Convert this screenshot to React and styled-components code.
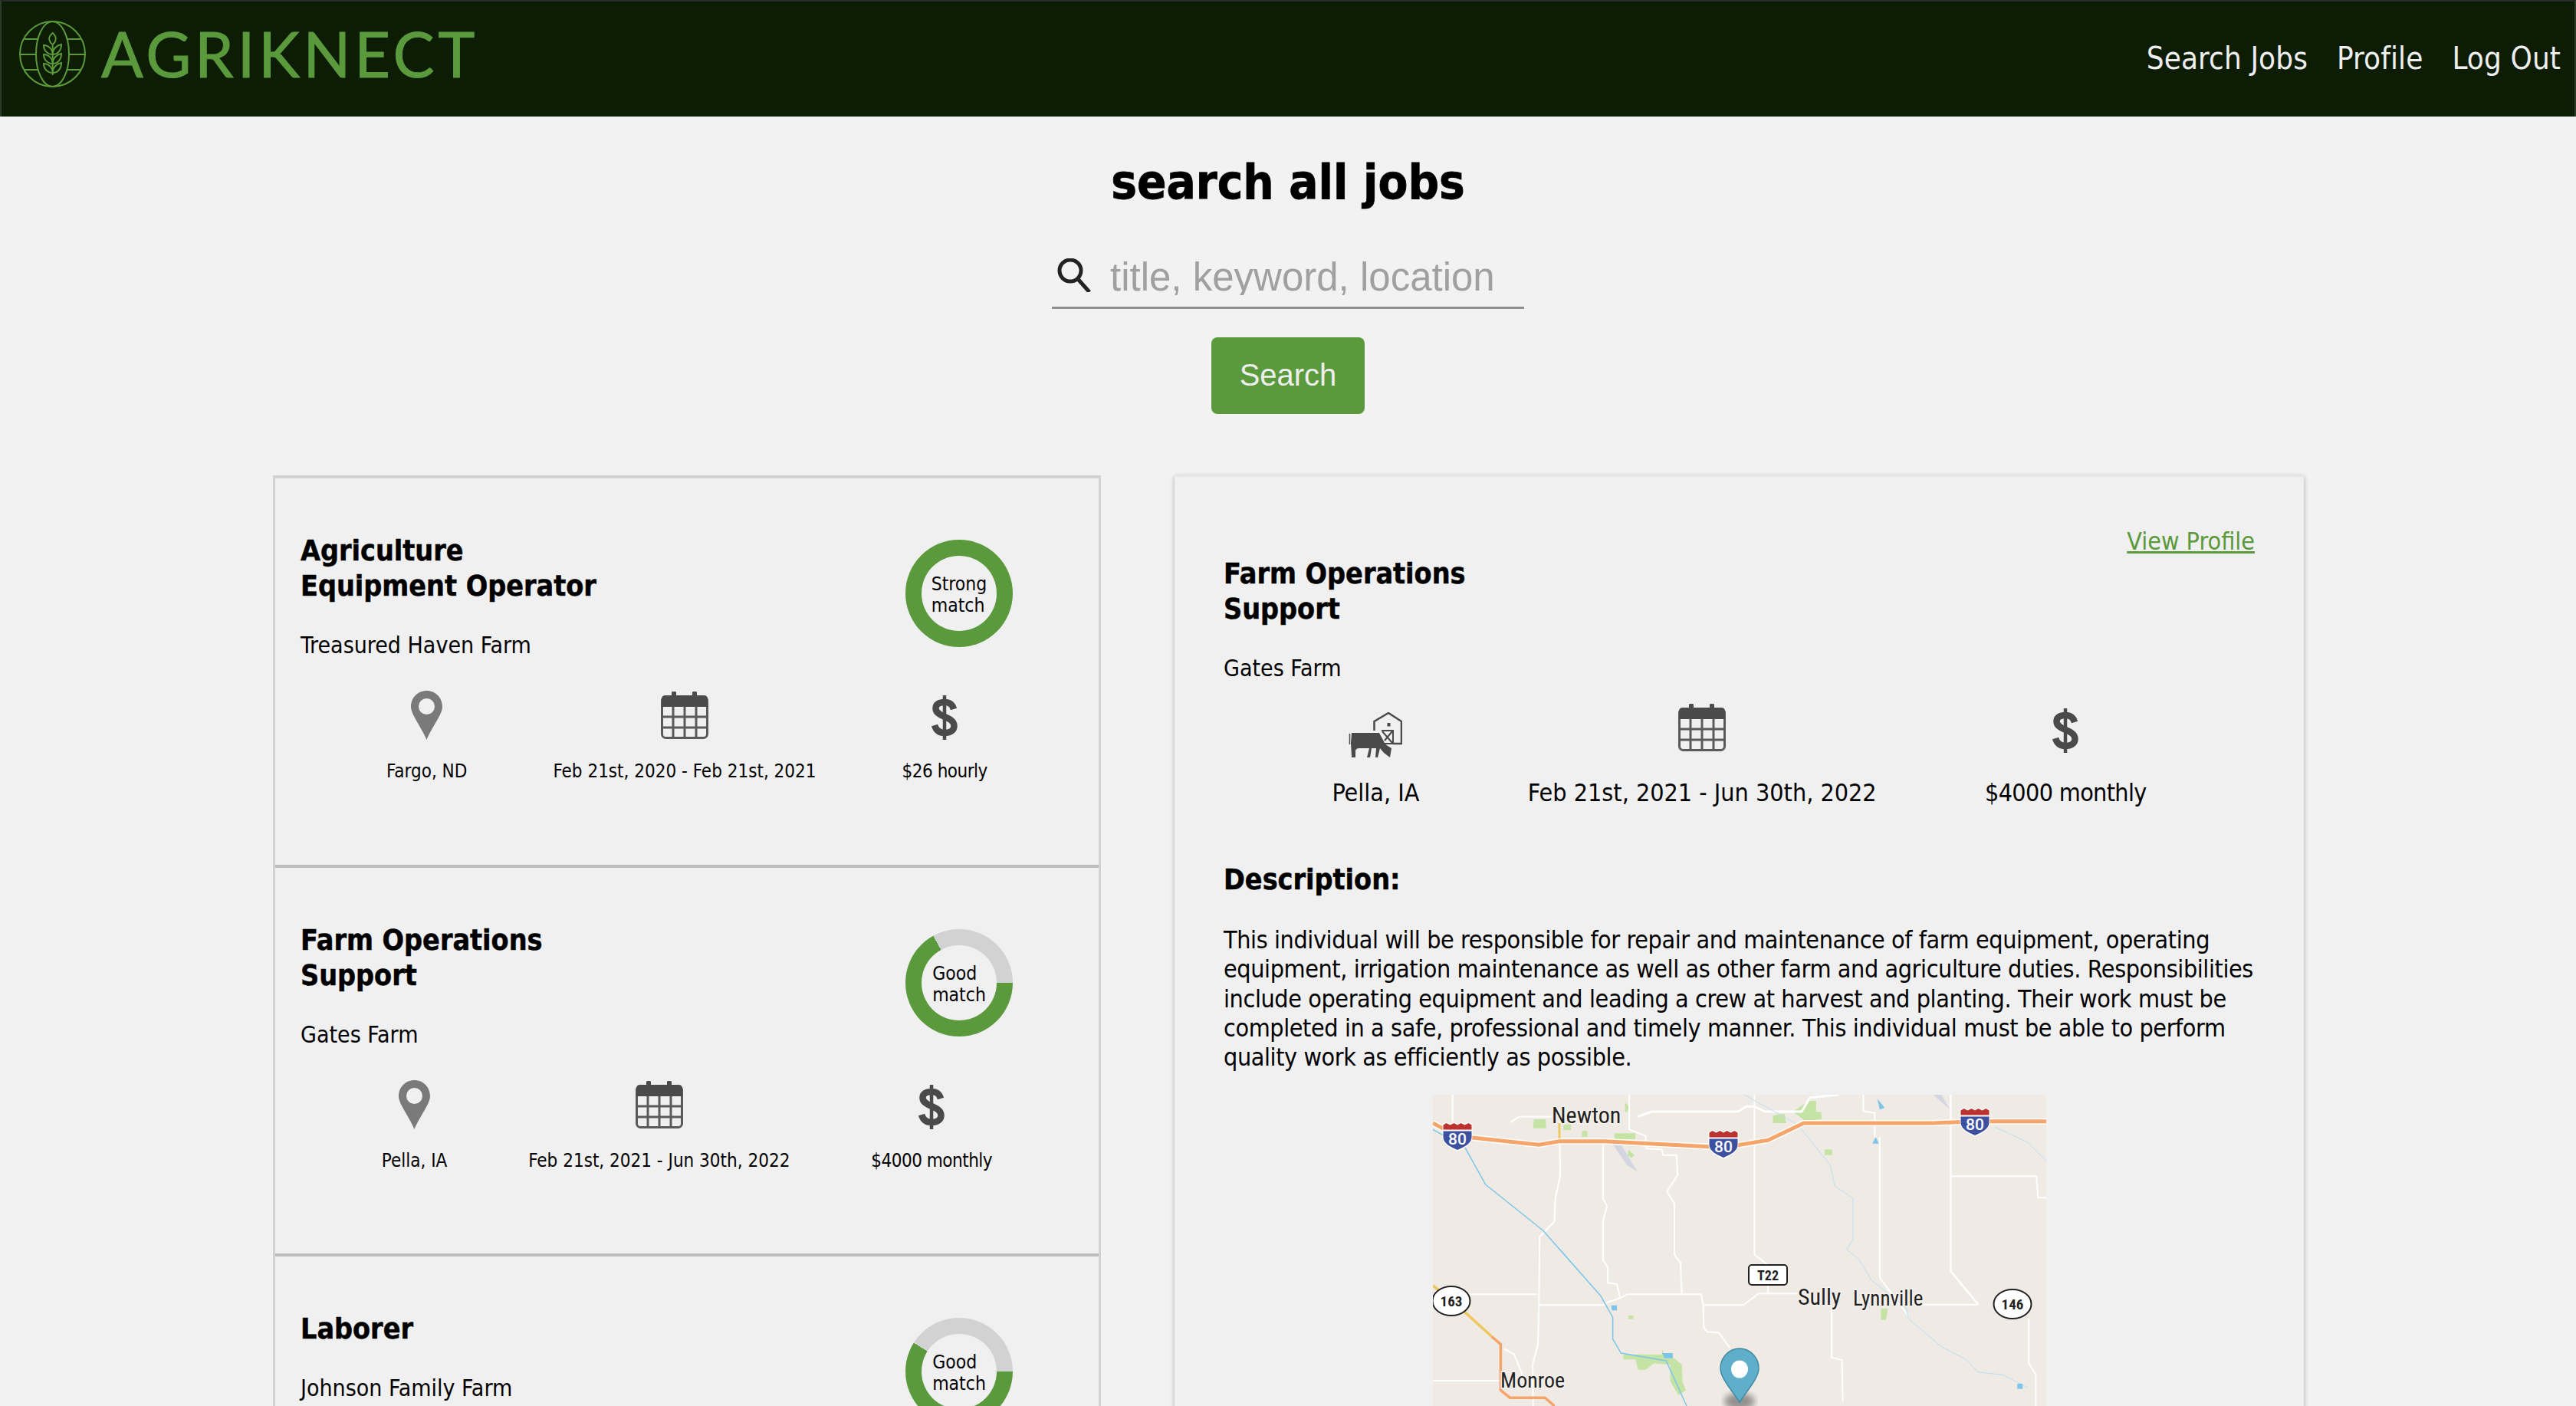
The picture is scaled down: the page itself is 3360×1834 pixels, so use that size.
import React from 'react';
import styled, { createGlobalStyle } from 'styled-components';

const GREEN = '#5a9a3c';
const BODY_FONT = '"DejaVu Sans", "Open Sans", sans-serif';

const GlobalStyle = createGlobalStyle`
  html, body {
    margin: 0;
    padding: 0;
    height: 100%;
    overflow: hidden;
    background: #f2f2f2;
  }
  body {
    font-family: ${BODY_FONT};
    font-stretch: condensed;
    color: #000;
  }
`;

const Page = styled.div`
  height: 1834px;
  overflow: hidden;
`;

const Header = styled.header`
  box-sizing: border-box;
  height: 152px;
  display: flex;
  align-items: flex-start;
  justify-content: space-between;
  background: #0d1c04;
  border-top: 2px solid #2a2a2a;
  border-left: 2px solid #2c3a26;
  border-right: 2px solid #2c3a26;
`;

const Logo = styled.div`
  display: flex;
  align-items: center;
  gap: 20px;
  margin: 24px 0 0 23px;
`;

const LogoText = styled.span`
  font-family: Lato, sans-serif;
  font-stretch: normal;
  font-size: 81px;
  line-height: 88px;
  letter-spacing: 4.8px;
  -webkit-text-stroke: 1px ${GREEN};
  color: ${GREEN};
`;

const Nav = styled.nav`
  display: flex;
  gap: 38px;
  margin: 50px 18px 0 0;
`;

const NavLink = styled.a`
  font-size: 40px;
  line-height: 48px;
  letter-spacing: 0.1px;
  color: #eee;
  text-decoration: none;
`;

const Title = styled.h1`
  margin: 48px 0 0;
  font-size: 63px;
  line-height: 76px;
  font-weight: 700;
  text-align: center;
  -webkit-text-stroke: 0.8px #000;
`;

const SearchBox = styled.div`
  box-sizing: border-box;
  width: 616px;
  height: 73px;
  margin: 54px auto 0;
  display: flex;
  align-items: flex-start;
  gap: 25px;
  padding: 7px 0 0 7px;
  border-bottom: 3px solid #8f8f8f;
`;

const SearchInput = styled.input`
  flex: 1;
  min-width: 0;
  height: 48px;
  padding: 0;
  border: 0;
  outline: 0;
  background: transparent;
  font-family: "Liberation Sans", sans-serif;
  font-stretch: normal;
  font-size: 51px;
  &::placeholder {
    color: #a0a0a0;
    opacity: 1;
  }
`;

const SearchButton = styled.button`
  display: block;
  width: 200px;
  height: 100px;
  margin: 37px auto 0;
  padding: 0 0 2px;
  border: 0;
  border-radius: 8px;
  background: ${GREEN};
  color: #eee;
  font-family: "Liberation Sans", sans-serif;
  font-stretch: normal;
  font-size: 40px;
`;

const Columns = styled.div`
  display: flex;
  align-items: flex-start;
  gap: 96px;
  margin-top: 80px;
  padding-left: 356px;
`;

const JobList = styled.section`
  box-sizing: border-box;
  width: 1080px;
  flex: none;
  background: #f0f0f0;
  border: solid #d2d2d2;
  border-width: 4px 3px;
`;

const JobCard = styled.article`
  box-sizing: border-box;
  height: 507.5px;
  padding: 71px 33px 0;
  border-bottom: 4px solid #bdbdbd;
`;

const CardHead = styled.div`
  display: flex;
  justify-content: space-between;
  align-items: flex-start;
  min-height: 165px;
`;

const JobTitle = styled.h2`
  margin: 0;
  font-size: 37.3px;
  line-height: 46px;
  font-weight: 700;
  -webkit-text-stroke: 0.5px #000;
`;

const Company = styled.p`
  margin: 37px 0 0;
  font-size: 30px;
  line-height: 36px;
`;

const Ring = styled.div`
  box-sizing: border-box;
  width: 140px;
  height: 140px;
  margin: 9px 79px 0 0;
  padding: 21px;
  flex: none;
  border-radius: 50%;
  background: conic-gradient(
    from 90deg,
    ${GREEN} 0 ${(p) => p.$pct}%,
    #d2d2d2 ${(p) => p.$pct}% 100%
  );
`;

const RingLabel = styled.div`
  width: 100%;
  height: 100%;
  padding-top: 4px;
  box-sizing: border-box;
  display: flex;
  align-items: center;
  justify-content: center;
  border-radius: 50%;
  background: #f0f0f0;
  font-size: 24.5px;
  line-height: 28px;
`;

const MetaRow = styled.div`
  display: flex;
  justify-content: space-evenly;
  margin-top: ${(p) => (p.$large ? 28 : 41)}px;
`;

const MetaItem = styled.div`
  display: flex;
  flex-direction: column;
  align-items: center;
`;

const IconBox = styled.div`
  display: flex;
  justify-content: center;
  align-items: ${(p) => p.$align || 'center'};
  height: ${(p) => (p.$large ? 70 : 64)}px;
`;

const MetaLabel = styled.span`
  margin-top: ${(p) => (p.$large ? 27 : 26)}px;
  font-size: ${(p) => (p.$large ? 32 : 24)}px;
  line-height: ${(p) => (p.$large ? 38 : 30)}px;
  letter-spacing: ${(p) => p.$tight || 0}px;
  white-space: nowrap;
`;

const DetailPanel = styled.section`
  box-sizing: border-box;
  width: 1473px;
  height: 1300px;
  flex: none;
  padding: 66px 64px 0;
  background: #f0f0f0;
  border-top: 2px solid #e6e6e6;
  box-shadow: 0 2px 6px rgba(0, 0, 0, 0.3);
`;

const ProfileLink = styled.a`
  display: block;
  text-align: right;
  margin-bottom: 1px;
  font-size: 32px;
  line-height: 36px;
  color: ${GREEN};
  text-decoration: underline;
`;

const DescHeading = styled.h3`
  margin: 71px 0 0;
  font-size: 37.3px;
  line-height: 46px;
  font-weight: 700;
  -webkit-text-stroke: 0.5px #000;
`;

const DescText = styled.p`
  margin: 37px 0 0;
  font-size: 32px;
  line-height: 38.3px;
  letter-spacing: -0.4px;
  white-space: nowrap;
`;

const MapFrame = styled.div`
  width: 800px;
  height: 406px;
  margin: 30px auto 0;
  overflow: hidden;
`;

const SearchIcon = () => (
  <svg width="44" height="44" viewBox="0 0 44 44" fill="none" stroke="#222">
    <circle cx="17" cy="16" r="14" strokeWidth="5" />
    <path d="M27 27 L42 44" strokeWidth="5" />
  </svg>
);

const PinIcon = () => (
  <svg width="41" height="64" viewBox="0 0 41 64">
    <path
      fill="#7a7a7a"
      fillRule="evenodd"
      d="M20.5 0C32 0 41 9 41 21C41 31 27 48 20.5 64C14 48 0 31 0 21C0 9 9 0 20.5 0ZM20.5 10A10.5 10.5 0 1 0 20.5 31A10.5 10.5 0 1 0 20.5 10Z"
    />
  </svg>
);

const CalendarIcon = () => (
  <svg width="62" height="62" viewBox="0 0 62 62" fill="none">
    <rect x="1.5" y="7" width="59" height="53.5" rx="5" stroke="#5a5a5a" strokeWidth="3" />
    <path fill="#4a4a4a" d="M1 20V10Q1 5 6 5H14V1Q14 0 16 0H18Q20 0 20 1V5H41V1Q41 0 43 0H45Q47 0 47 1V5H56Q61 5 61 10V20Z" />
    <path stroke="#5a5a5a" strokeWidth="3" d="M16 20V60M31 20V60M46 20V60M2 33H60M2 47H60" />
  </svg>
);

const DollarIcon = () => (
  <svg width="34" height="58" viewBox="0 0 34 58" fill="none" stroke="#4a4a4a">
    <path strokeWidth="8.5" d="M29 18C27 11 23 9 17 9C10 9 5.500 12 5.500 17C5.500 29 29.500 27 29.500 40C29.500 46 24 49 17 49C10 49 6 46 4 39" />
    <path strokeWidth="4.500" d="M17 0V58" />
  </svg>
);

const BarnIcon = () => (
  <svg width="70" height="59" viewBox="0 0 70 59" fill="none" stroke="#4a4a4a">
    <path strokeWidth="2.500" d="M33.500 24V12L52 1L69 12V41H58" />
    <rect x="50.500" y="14" width="4" height="4.500" fill="#4a4a4a" stroke="none" />
    <path strokeWidth="2" d="M43 24H58V41H47M44 25L57 40M57 25L47 37" />
    <path
      fill="#4a4a4a"
      stroke="none"
      d="M4 27H40L48 42L56 47L54 59L46 53L41 47L38 59H35L36 47H30L28 59H24L27 47H14Q10 47 9 50L9 59H4L3 40Z"
    />
    <path strokeWidth="1.500" d="M1.500 28V42" />
  </svg>
);

const GlobeLogo = () => (
  <svg width="87" height="87" viewBox="0 0 87 87" fill="none" stroke={GREEN} strokeWidth="2">
    <circle cx="43.500" cy="43.500" r="42.500" />
    <ellipse cx="43.500" cy="43.500" rx="21.500" ry="42.500" />
    <path d="M7 24H24M1 44H22M7 64H24M63 24H80M65 44H86M63 64H80" />
    <path d="M43.700 30V71M43.700 16C47 19 49 23 47 27C46 29 45 30 43.700 31C42 30 41 29 40 27C38 23 40 19 43.700 16Z" />
    <path d="M43.700 44C37 44 32 39 32 32C38 32 43.700 37 43.700 44C43.700 37 49 32 55 31C55 39 50 44 43.700 44Z" />
    <path d="M43.700 56C37 56 32 51 32 44C38 44 43.700 49 43.700 56C43.700 49 49 44 55 43C55 51 50 56 43.700 56Z" />
    <path d="M43.700 68C37 68 32 63 32 56C38 56 43.700 61 43.700 68C43.700 61 49 56 55 55C55 63 50 68 43.700 68Z" />
  </svg>
);

// zoomed-crop coordinates are squeezed back to px by the group transform
const ROADS = [
  'M100 54V160',
  'M240 163L262 140H340',
  'M530 54V190L570 215L572 265L610 268L612 290H645L648 368L622 432L640 480V680L655 712L658 835',
  'M360 160L362 370L350 460L348 550L312 610L310 880L308 1030L295 1110L296 1272',
  'M466 240V460L476 490L466 550V700L478 730V790L500 795L508 850L470 870',
  'M310 877H470M130 835H305',
  'M508 850L525 835H705L710 877H808L845 832H940',
  'M710 877L712 965L720 982L748 985L775 1045',
  'M835 54V680L868 720M868 800V832',
  'M1023 880V1082L1048 1092L1050 1255',
  'M1240 875H1380M1313 373H1522L1525 457H1546',
  'M1140 220V770L1210 920',
  'M1100 54V118L1128 125V220',
  'M1503 930V1105L1520 1150V1272',
  'M52 1173H220M225 1048L250 1070L270 1150',
];

const GREEN_PATCHES = [
  'M298 150H326L328 185H296Z',
  'M370 170H388V192H370Z',
  'M415 195H428V218H415Z',
  'M494 205H545V228H494Z',
  'M520 85L530 100L525 122L520 120Z',
  'M928 120L968 78H985V120L998 122V150L958 155Z',
  'M880 135L908 128L912 165H880Z',
  'M1006 268H1024V290H1006Z',
  'M528 270L543 290L535 302L526 290Z',
  'M1143 890H1160L1155 935H1143Z',
  'M528 918H540V932H528Z',
  'M516 1070H610V1050L620 1085H640L658 1110L660 1180L668 1210L650 1230L630 1175V1110L590 1105L570 1130H552L545 1090H516Z',
];

const InterstateShield = ({ x, y }) => (
  <g transform={`translate(${x - 18.500} ${y - 18.500})`}>
    <path fill="#fff" d="M-1 3L5 0L9 3L14 0L18.500 3L23 0L28 3L32 0L38 3V20C38 29 27 35 18.500 38C10 35 -1 29 -1 20Z" />
    <path fill="#bb3230" d="M0 10V4L4 1.500L9 4L14 1.500L18.500 4L23 1.500L28 4L33 1.500L37 4V10Z" />
    <path fill="#3d50a0" d="M0 12H37V20C37 28 27 33 18.500 36.500C10 33 0 28 0 20Z" />
    <text x="18.500" y="29" fill="#fff" fontFamily="Roboto, sans-serif" fontSize="21" fontWeight="500" textAnchor="middle" style={{ fontStretch: 'normal' }}>
      80
    </text>
  </g>
);

const StateShield = ({ x, y, children }) => (
  <g>
    <ellipse cx={x} cy={y} rx="24.500" ry="19" fill="#fff" stroke="#222" strokeWidth="2" />
    <text x={x} y={y + 7} fontFamily="Roboto, sans-serif" fontSize="19" fontWeight="700" textAnchor="middle" fill="#222">
      {children}
    </text>
  </g>
);

const Place = ({ x, y, size, children }) => (
  <text
    x={x}
    y={y}
    fontFamily="Roboto, sans-serif"
    fontSize={size}
    fill="#222"
    stroke="#f5f2ee"
    strokeWidth="3"
    paintOrder="stroke"
  >
    {children}
  </text>
);

const JobMap = () => (
  <svg width="800" height="406" viewBox="0 0 800 406">
    <defs>
      <filter id="pinShadow">
        <feGaussianBlur stdDeviation="4" />
      </filter>
    </defs>
    <rect width="800" height="406" fill="#efeae4" />
    <g transform="scale(.5357 .3333) translate(-52 -54)" fill="none" strokeLinejoin="round">
      {GREEN_PATCHES.map((d) => (
        <path key={d} d={d} fill="#c4e3a5" />
      ))}
      <path d="M490 248H510L550 355L525 330Z" fill="#d3d6e0" />
      <path d="M1270 54H1290L1310 110Z" fill="#d3d6e0" />
      {ROADS.map((d) => (
        <path key={d} d={d} stroke="#fff" strokeWidth="2" vectorEffect="non-scaling-stroke" />
      ))}
      <path d="M1313 54V745L1380 875" stroke="#fff" strokeWidth="2.500" vectorEffect="non-scaling-stroke" />
      <path d="M550 140L585 120H795L815 100H835L860 120H950L970 65L1040 54" stroke="#fff" strokeWidth="3" vectorEffect="non-scaling-stroke" />
      <path d="M810 54L940 170L1020 330L1030 410L1075 460V620L1060 660L1090 700L1120 780L1205 890L1210 930L1290 1040L1350 1090L1380 1140L1440 1150L1500 1200M1420 180L1500 240L1546 315" stroke="#b9dff2" strokeWidth="1" vectorEffect="non-scaling-stroke" />
      <path d="M52 190L130 260L180 405L320 585L460 840L490 925V1010L510 1065L620 1095L670 1272" stroke="#7cc5ea" strokeWidth="1.500" vectorEffect="non-scaling-stroke" />
      <path d="M360 165V232" stroke="#edc85f" strokeWidth="3" vectorEffect="non-scaling-stroke" />
      <path d="M52 800L130 905L195 1000" stroke="#edc85f" strokeWidth="3.500" vectorEffect="non-scaling-stroke" />
      <path d="M195 1000L217 1030V1210L240 1240H325L348 1272" stroke="#f5a56a" strokeWidth="3.500" vectorEffect="non-scaling-stroke" />
      <path d="M52 165L110 215L310 250L360 236H470L760 260L868 232L955 165H1270L1372 158H1546" stroke="#fff" strokeWidth="8" vectorEffect="non-scaling-stroke" />
      <path d="M52 165L110 215L310 250L360 236H470L760 260L868 232L955 165H1270L1372 158H1546" stroke="#f5a56a" strokeWidth="5" vectorEffect="non-scaling-stroke" />
      <path d="M1130 220L1138 245H1122Z" fill="#7cc5ea" />
      <path d="M1134 70L1152 105L1140 112Z" fill="#7cc5ea" />
      <path d="M486 878H500V898H488Z" fill="#7cc5ea" />
      <path d="M1475 1185H1488V1205H1475Z" fill="#7cc5ea" />
      <path d="M610 1065H636V1085H616Z" fill="#7cc5ea" />
    </g>
    <InterstateShield x={32} y={54} />
    <InterstateShield x={379} y={64} />
    <InterstateShield x={707} y={35} />
    <StateShield x={24} y={269}>163</StateShield>
    <StateShield x={756} y={273}>146</StateShield>
    <rect x="412" y="222" width="50" height="26" rx="4" fill="#fff" stroke="#222" strokeWidth="2" />
    <text x="437" y="242" fontFamily="Roboto, sans-serif" fontSize="18" fontWeight="700" textAnchor="middle" fill="#222">
      T22
    </text>
    <Place x={155} y={37} size={30}>Newton</Place>
    <Place x={476} y={274} size={30}>Sully</Place>
    <Place x={548} y={275} size={27}>Lynnville</Place>
    <Place x={88} y={382} size={28}>Monroe</Place>
    <ellipse cx="400" cy="400" rx="20" ry="11" fill="#555" opacity=".6" filter="url(#pinShadow)" />
    <path
      d="M400 331C414 331 425 343 425 357C425 370 408 388 400 401C392 388 375 370 375 357C375 343 386 331 400 331Z"
      fill="#5fafca"
      stroke="#3f8aa5"
      strokeWidth="1.500"
    />
    <ellipse cx="400" cy="358" rx="11" ry="11.500" fill="#fff" />
  </svg>
);

// the third card's details sit below the fold, so only its head is listed
const JOBS = [
  {
    title: ['Agriculture', 'Equipment Operator'],
    company: 'Treasured Haven Farm',
    match: ['Strong', 'match'],
    pct: 100,
    place: 'Fargo, ND',
    dates: 'Feb 21st, 2020 - Feb 21st, 2021',
    pay: '$26 hourly',
  },
  {
    title: ['Farm Operations', 'Support'],
    company: 'Gates Farm',
    match: ['Good', 'match'],
    pct: 67,
    place: 'Pella, IA',
    dates: 'Feb 21st, 2021 - Jun 30th, 2022',
    pay: '$4000 monthly',
  },
  {
    title: ['Laborer'],
    company: 'Johnson Family Farm',
    match: ['Good', 'match'],
    pct: 59,
  },
];

const Lines = ({ lines }) =>
  lines.map((line, i) => (
    <React.Fragment key={line}>
      {i > 0 && <br />}
      {line}
    </React.Fragment>
  ));

const Job = ({ job }) => (
  <JobCard>
    <CardHead>
      <div>
        <JobTitle>
          <Lines lines={job.title} />
        </JobTitle>
        <Company>{job.company}</Company>
      </div>
      <Ring $pct={job.pct}>
        <RingLabel>
          <div>
            <Lines lines={job.match} />
          </div>
        </RingLabel>
      </Ring>
    </CardHead>
    {job.place && (
      <MetaRow>
        <MetaItem>
          <IconBox><PinIcon /></IconBox>
          <MetaLabel>{job.place}</MetaLabel>
        </MetaItem>
        <MetaItem>
          <IconBox><CalendarIcon /></IconBox>
          <MetaLabel>{job.dates}</MetaLabel>
        </MetaItem>
        <MetaItem>
          <IconBox $align="flex-end"><DollarIcon /></IconBox>
          <MetaLabel $tight={-0.5}>{job.pay}</MetaLabel>
        </MetaItem>
      </MetaRow>
    )}
  </JobCard>
);

const DESCRIPTION = [
  'This individual will be responsible for repair and maintenance of farm equipment, operating',
  'equipment, irrigation maintenance as well as other farm and agriculture duties. Responsibilities',
  'include operating equipment and leading a crew at harvest and planting. Their work must be',
  'completed in a safe, professional and timely manner. This individual must be able to perform',
  'quality work as efficiently as possible.',
];

export default function App() {
  return (
    <Page>
      <GlobalStyle />
      <Header>
        <Logo>
          <GlobeLogo />
          <LogoText>AGRIKNECT</LogoText>
        </Logo>
        <Nav>
          <NavLink href="#">Search Jobs</NavLink>
          <NavLink href="#">Profile</NavLink>
          <NavLink href="#">Log Out</NavLink>
        </Nav>
      </Header>
      <main>
        <Title>search all jobs</Title>
        <SearchBox>
          <SearchIcon />
          <SearchInput placeholder="title, keyword, location" />
        </SearchBox>
        <SearchButton>Search</SearchButton>
        <Columns>
          <JobList>
            {JOBS.map((job) => (
              <Job key={job.company} job={job} />
            ))}
          </JobList>
          <DetailPanel>
            <ProfileLink href="#">View Profile</ProfileLink>
            <JobTitle>
              <Lines lines={JOBS[1].title} />
            </JobTitle>
            <Company>Gates Farm</Company>
            <MetaRow $large>
              <MetaItem>
                <IconBox $large $align="flex-end"><BarnIcon /></IconBox>
                <MetaLabel $large>Pella, IA</MetaLabel>
              </MetaItem>
              <MetaItem>
                <IconBox $large $align="flex-start"><CalendarIcon /></IconBox>
                <MetaLabel $large>Feb 21st, 2021 - Jun 30th, 2022</MetaLabel>
              </MetaItem>
              <MetaItem>
                <IconBox $large><DollarIcon /></IconBox>
                <MetaLabel $large $tight={-0.66}>$4000 monthly</MetaLabel>
              </MetaItem>
            </MetaRow>
            <DescHeading>Description:</DescHeading>
            <DescText>
              <Lines lines={DESCRIPTION} />
            </DescText>
            <MapFrame>
              <JobMap />
            </MapFrame>
          </DetailPanel>
        </Columns>
      </main>
    </Page>
  );
}
